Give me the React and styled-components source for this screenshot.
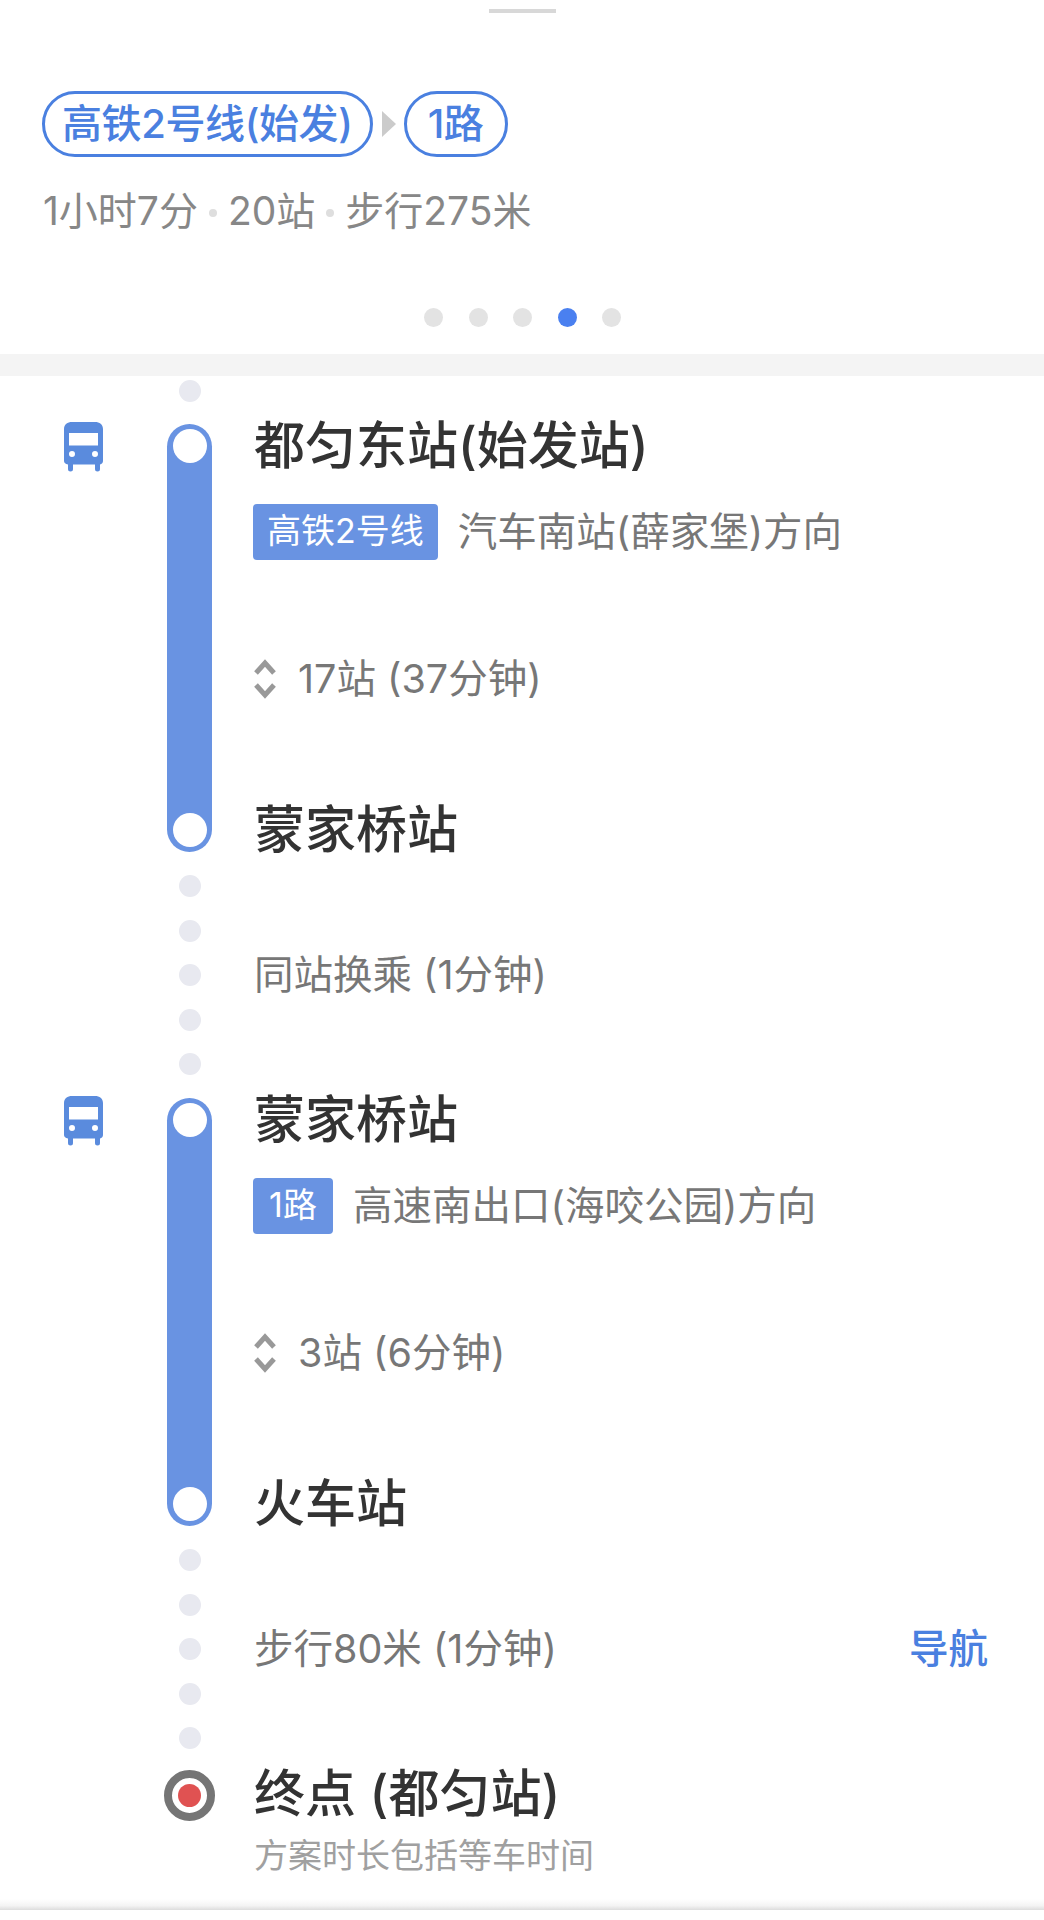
import styled, { createGlobalStyle } from 'styled-components';

const GlobalStyle = createGlobalStyle`
    html, body {
        margin: 0;
        padding: 0;
        background: #fff;
    }
    body {
        font-family: Inter, "Noto Sans CJK SC", sans-serif;
    }
`;

const Page = styled('div')`
    position: relative;
    width: 1044px;
    height: 1920px;
    overflow: hidden;
    background: #fff;
    box-sizing: border-box;
`;

const Summary = styled('div')`
    height: 354px;
    padding-top: 9px;
    box-sizing: border-box;
`;

const Handle = styled('div')`
    width: 67px;
    height: 4px;
    margin: 0 auto;
    background: #d8d8d8;
`;

const PillRow = styled('div')`
    display: flex;
    align-items: center;
    margin: 78px 0 0 42px;
`;

const Pill = styled('div')`
    min-width: 104px;
    height: 66px;
    padding: 0 17px;
    box-sizing: border-box;
    border: 3px solid #4a80e0;
    border-radius: 33px;
    color: #4a80e0;
    font-size: 40px;
    font-weight: 500;
    line-height: 60px;
    letter-spacing: -0.4px;
    text-align: center;
    white-space: nowrap;
`;

const PillArrow = styled('div')`
    width: 0;
    height: 0;
    margin: 0 8px 0 9px;
    border-style: solid;
    border-width: 13px 0 13px 14px;
    border-color: transparent transparent transparent #cbcbcb;
`;

const Meta = styled('div')`
    display: flex;
    align-items: center;
    margin: 26px 0 0 43px;
    color: #878787;
    font-size: 39px;
    line-height: 56px;
`;

const MetaDot = styled('span')`
    width: 8px;
    height: 8px;
    margin: 4px 11px 0;
    border-radius: 50%;
    background: #dedede;
`;

const Pager = styled('div')`
    display: flex;
    justify-content: center;
    gap: 25.5px;
    margin: 69px 0 0;
    padding-left: 1px;
`;

const PagerDot = styled('span')`
    width: 19px;
    height: 19px;
    border-radius: 50%;
    background: ${(p) => (p.$active ? '#4a80f0' : '#e3e3e3')};
`;

const Band = styled('div')`
    height: 22px;
    background: #f4f4f4;
`;

const Row = styled('div')`
    display: grid;
    grid-template-columns: 167px 45px 1fr;
`;

const TopDots = styled(Row)`
    padding: 4px 0 22px;
`;

const DotColumn = styled('div')`
    grid-column: 2;
    display: flex;
    flex-direction: column;
    align-items: center;
    gap: 22.5px;
`;

const Dot = styled('span')`
    width: 22px;
    height: 22px;
    border-radius: 50%;
    background: #e8e9f0;
`;

const IconCell = styled('div')`
    display: flex;
    margin: -2px 0 0 64px;
`;

const Bar = styled('div')`
    height: 428px;
    display: flex;
    flex-direction: column;
    justify-content: space-between;
    align-items: center;
    padding: 5px 0;
    box-sizing: border-box;
    border-radius: 23px;
    background: #6993e2;
`;

const BarStop = styled('span')`
    width: 34px;
    height: 34px;
    border-radius: 50%;
    background: #fff;
`;

const LegBody = styled('div')`
    display: flex;
    flex-direction: column;
    align-items: flex-start;
    padding-left: 42px;
`;

const StopName = styled('div')`
    color: #333;
    font-size: 51px;
    font-weight: 500;
    line-height: 44px;
    white-space: nowrap;
`;

const LastStop = styled(StopName)`
    margin-top: auto;
`;

const Line = styled('div')`
    display: flex;
    align-items: center;
    margin: 36px 0 0 -1px;
`;

const LineTag = styled('span')`
    min-width: 80px;
    height: 56px;
    padding: 0 14px;
    box-sizing: border-box;
    border-radius: 4px;
    background: #6993e2;
    color: #fff;
    font-size: 34px;
    line-height: 54px;
    text-align: center;
    white-space: nowrap;
`;

const Direction = styled('span')`
    margin-left: 20px;
    color: #777;
    font-size: 39.5px;
    line-height: 56px;
    white-space: nowrap;
`;

const Stops = styled('div')`
    display: flex;
    align-items: center;
    gap: 21px;
    margin: 96px 0 0 -1px;
    color: #777;
    font-size: 39.5px;
    line-height: 46px;
`;

const WalkRow = styled(Row)`
    padding: 23px 0;
    align-items: center;
`;

const WalkBody = styled('div')`
    grid-column: 3;
    display: flex;
    align-items: center;
    justify-content: space-between;
    padding: 0 56px 0 42px;
    color: #777;
    font-size: 39.5px;
    line-height: 50px;
`;

const NavLink = styled('span')`
    color: #4a80e0;
    font-weight: 500;
`;

const EndMarkerCell = styled('div')`
    grid-column: 2;
    display: flex;
    justify-content: center;
`;

const EndMarker = styled('div')`
    display: flex;
    align-items: center;
    justify-content: center;
    width: 51px;
    height: 51px;
    margin: -2px -3px 0;
    flex: none;
    box-sizing: border-box;
    border: 8px solid #757575;
    border-radius: 50%;
    background: #fff;
`;

const EndDot = styled('span')`
    width: 23px;
    height: 23px;
    border-radius: 50%;
    background: #e05252;
`;

const EndBody = styled('div')`
    grid-column: 3;
    padding-left: 42px;
`;

const Note = styled('div')`
    margin-top: 18px;
    color: #a0a0a0;
    font-size: 34px;
    line-height: 44px;
    white-space: nowrap;
`;

const BottomEdge = styled('div')`
    position: absolute;
    left: 0;
    right: 0;
    top: 1899px;
    height: 11px;
    background: linear-gradient(to bottom, #fff 0%, #f4f4f4 60%, #dcdcdc 100%);
`;

const Bus = () => (
    <svg width="39" height="50" viewBox="0 0 39 50">
        <path
            fill="#5a8bdd"
            fillRule="evenodd"
            d="M8 0h23c4.500 0 8 2.500 8 7v32c0 2-1.200 3.200-3 3.400V47a2.500 2.500 0 0 1-5 0v-4.500H9V47a2.500 2.500 0 0 1-5 0v-4.600C1.500 42.200 0 41 0 39V7C0 2.500 3.500 0 8 0zM5 11v12.500h29V11zM8 29a3 3 0 1 0 0 6 3 3 0 0 0 0-6zM31 29a3 3 0 1 0 0 6 3 3 0 0 0 0-6z"
        />
    </svg>
);

const Chevrons = () => (
    <svg width="24" height="42" viewBox="0 0 24 42">
        <path d="M3 15l9-10 9 10M3 27l9 10 9-10" fill="none" stroke="#999" strokeWidth="5" />
    </svg>
);

const Leg = ({ from, to, line, direction, stops }) => (
    <Row>
        <IconCell>
            <Bus />
        </IconCell>
        <Bar>
            <BarStop />
            <BarStop />
        </Bar>
        <LegBody>
            <StopName>{from}</StopName>
            <Line>
                <LineTag>{line}</LineTag>
                <Direction>{direction}</Direction>
            </Line>
            <Stops>
                <Chevrons />
                <span>{stops}</span>
            </Stops>
            <LastStop>{to}</LastStop>
        </LegBody>
    </Row>
);

const Walk = ({ children, nav }) => (
    <WalkRow>
        <DotColumn>
            <Dot />
            <Dot />
            <Dot />
            <Dot />
            <Dot />
        </DotColumn>
        <WalkBody>
            <span>{children}</span>
            {nav && <NavLink>{nav}</NavLink>}
        </WalkBody>
    </WalkRow>
);

export default function App() {
    return (
        <Page>
            <GlobalStyle />
            <Summary>
                <Handle />
                <PillRow>
                    <Pill>高铁2号线(始发)</Pill>
                    <PillArrow />
                    <Pill>1路</Pill>
                </PillRow>
                <Meta>
                    1小时7分
                    <MetaDot />
                    20站
                    <MetaDot />
                    步行275米
                </Meta>
                <Pager>
                    <PagerDot />
                    <PagerDot />
                    <PagerDot />
                    <PagerDot $active />
                    <PagerDot />
                </Pager>
            </Summary>
            <Band />
            <TopDots>
                <DotColumn>
                    <Dot />
                </DotColumn>
            </TopDots>
            <Leg
                from="都匀东站(始发站)"
                to="蒙家桥站"
                line="高铁2号线"
                direction="汽车南站(薛家堡)方向"
                stops="17站 (37分钟)"
            />
            <Walk>同站换乘 (1分钟)</Walk>
            <Leg
                from="蒙家桥站"
                to="火车站"
                line="1路"
                direction="高速南出口(海咬公园)方向"
                stops="3站 (6分钟)"
            />
            <Walk nav="导航">步行80米 (1分钟)</Walk>
            <Row>
                <EndMarkerCell>
                    <EndMarker>
                        <EndDot />
                    </EndMarker>
                </EndMarkerCell>
                <EndBody>
                    <StopName>终点 (都匀站)</StopName>
                    <Note>方案时长包括等车时间</Note>
                </EndBody>
            </Row>
            <BottomEdge />
        </Page>
    );
}
